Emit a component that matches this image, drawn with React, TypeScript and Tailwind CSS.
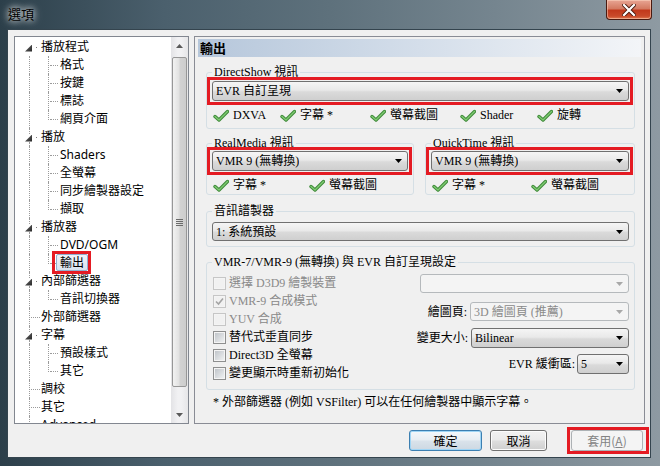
import React from 'react';

type Kind = 'root' | 'parent' | 'leaf' | 'child' | 'last' | 'end';

const TREE: { label: string; kind: Kind; sel?: boolean }[] = [
  { label: '播放程式', kind: 'root' },
  { label: '格式', kind: 'child' },
  { label: '按鍵', kind: 'child' },
  { label: '標誌', kind: 'child' },
  { label: '網頁介面', kind: 'last' },
  { label: '播放', kind: 'parent' },
  { label: 'Shaders', kind: 'child' },
  { label: '全螢幕', kind: 'child' },
  { label: '同步繪製器設定', kind: 'child' },
  { label: '擷取', kind: 'last' },
  { label: '播放器', kind: 'parent' },
  { label: 'DVD/OGM', kind: 'child' },
  { label: '輸出', kind: 'last', sel: true },
  { label: '內部篩選器', kind: 'parent' },
  { label: '音訊切換器', kind: 'last' },
  { label: '外部篩選器', kind: 'leaf' },
  { label: '字幕', kind: 'parent' },
  { label: '預設樣式', kind: 'child' },
  { label: '其它', kind: 'last' },
  { label: '調校', kind: 'leaf' },
  { label: '其它', kind: 'leaf' },
  { label: 'Advanced', kind: 'end' },
];

// expander glyph of the Win7 tree (filled, pointing down-right)
function Expander() {
  return (
    <div className="flex h-[18px] w-[22px] shrink-0 items-center">
      <div className="ml-[10px] mt-[2px] h-[7px] w-[7px] shrink-0 bg-[linear-gradient(135deg,#6a6a6a,#262626)] [clip-path:polygon(100%_0,100%_100%,0_100%)]" />
      <div className="ml-[4px] h-[1px] w-[1px] bg-[#808080]" />
    </div>
  );
}

// dotted connector lines
function Connector({ kind }: { kind: Kind }) {
  const level2 = kind === 'child' || kind === 'last';
  if (kind === 'root' || kind === 'parent') {
    return (
      <div className="relative h-[18px] w-[22px] shrink-0">
        {kind === 'parent' && (
          <>
            <div className="absolute left-[14px] top-0 h-[6px] border-l border-dotted border-[#9a9a9a]" />
            <div className="absolute left-[14px] top-[14px] h-[4px] border-l border-dotted border-[#9a9a9a]" />
          </>
        )}
        <Expander />
      </div>
    );
  }
  return (
    <div className={`relative h-[18px] shrink-0 ${level2 ? 'w-[41px]' : 'w-[22px]'}`}>
      <div
        className={`absolute left-[14px] top-0 border-l border-dotted border-[#9a9a9a] ${
          kind === 'end' ? 'h-[10px]' : 'h-[18px]'
        }`}
      />
      {!level2 && <div className="absolute left-[16px] top-[9px] w-[9px] border-t border-dotted border-[#9a9a9a]" />}
      {level2 && (
        <>
          <div
            className={`absolute left-[33px] top-0 border-l border-dotted border-[#9a9a9a] ${
              kind === 'last' ? 'h-[10px]' : 'h-[18px]'
            }`}
          />
          <div className="absolute left-[35px] top-[9px] w-[8px] border-t border-dotted border-[#9a9a9a]" />
        </>
      )}
    </div>
  );
}

function ScrollBar() {
  return (
    <div className="flex w-[17px] shrink-0 flex-col bg-[linear-gradient(90deg,#e3e3e6,#f1f1f3_40%,#f1f1f3_60%,#e6e6e8)]">
      <div className="flex h-[17px] items-center justify-center">
        <svg width="7" height="4" viewBox="0 0 7 4">
          <path d="M0 4H7L3.5 0Z" fill="#5a5a5a" />
        </svg>
      </div>
      <div className="flex-1">
        <div className="mx-[1px] mt-[3px] flex h-[330px] w-[15px] items-center justify-center rounded-[2px] border border-[#979797] bg-[linear-gradient(90deg,#f2f2f2,#e2e2e2_45%,#d2d2d2_55%,#cdcdcd)]">
          <div className="flex flex-col gap-[1px]">
            <div className="h-[1px] w-[7px] bg-[#6b6b6b]" />
            <div className="h-[1px] w-[7px] bg-[#6b6b6b]" />
            <div className="h-[1px] w-[7px] bg-[#6b6b6b]" />
            <div className="h-[1px] w-[7px] bg-[#6b6b6b]" />
          </div>
        </div>
      </div>
      <div className="flex h-[17px] items-center justify-center">
        <svg width="7" height="4" viewBox="0 0 7 4">
          <path d="M0 0H7L3.5 4Z" fill="#5a5a5a" />
        </svg>
      </div>
    </div>
  );
}

function Tree() {
  return (
    <div className="flex h-[388px] w-[175px] shrink-0 border border-[#828790] bg-white">
      <div className="flex-1 overflow-hidden pt-[1px] text-[12px] text-black">
        {TREE.map((r, i) => (
          <div key={i} className="flex h-[18px] items-center">
            <Connector kind={r.kind} />
            {r.sel ? (
              <span className="relative flex h-[17px] items-center self-start rounded-[2px] border border-[#93afcf] bg-[linear-gradient(#eef3f9,#d9e3ee)] px-[3px] leading-[15px]">
                {r.label}
                <span className="pointer-events-none absolute bottom-[-4px] left-[-5px] right-[-4px] top-[-4px] border-[3px] border-[#e41b23]" />
              </span>
            ) : (
              <span className="whitespace-nowrap border border-transparent px-[3px] leading-[16px]">{r.label}</span>
            )}
          </div>
        ))}
      </div>
      <ScrollBar />
    </div>
  );
}

function Arrow({ disabled }: { disabled?: boolean }) {
  return (
    <svg width="7" height="4" viewBox="0 0 7 4" className="shrink-0">
      <path d="M0 0H7L3.5 4Z" fill={disabled ? '#a8a8a8' : '#000'} />
    </svg>
  );
}

function Combo({ text, className = '', disabled = false }: { text?: string; className?: string; disabled?: boolean }) {
  return (
    <div
      className={`flex items-center justify-between rounded-[3px] border pl-[3px] pr-[5px] ${
        disabled
          ? 'border-[#b5b9bc] bg-[#f4f4f4] text-[#8a8a8a]'
          : 'border-[#707070] bg-[linear-gradient(#f5f5f5,#e9e9e9_45%,#dadada_55%,#cfcfcf)] text-black'
      } ${className}`}
    >
      <span className="truncate leading-[14px]">{text}</span>
      <Arrow disabled={disabled} />
    </div>
  );
}

function Marked({ children }: { children: React.ReactNode }) {
  return (
    <div className="relative">
      {children}
      <span className="pointer-events-none absolute bottom-[-4px] left-[-5px] right-[-4px] top-[-4px] border-[3px] border-[#e41b23]" />
    </div>
  );
}

function GreenCheck() {
  return (
    <svg width="16" height="13" viewBox="0 0 16 13" className="shrink-0">
      <path d="M2 7.5 L6 11 L14.5 2.5" fill="none" stroke="#3f8a3a" strokeWidth="3.4" strokeLinecap="round" strokeLinejoin="round" />
      <path d="M2 7.5 L6 11 L14.5 2.5" fill="none" stroke="#7fcb72" strokeWidth="1.4" strokeLinecap="round" strokeLinejoin="round" />
    </svg>
  );
}

function Feat({ label, className = '' }: { label: string; className?: string }) {
  return (
    <div className={`flex h-[14px] items-center ${className}`}>
      <GreenCheck />
      <span className="ml-[4px] whitespace-nowrap leading-[14px]">{label}</span>
    </div>
  );
}

function CheckBox({ label, checked, disabled }: { label: string; checked?: boolean; disabled?: boolean }) {
  return (
    <div className="flex h-[18px] items-center">
      <span
        className={`flex h-[13px] w-[13px] shrink-0 items-center justify-center border p-[1px] ${
          disabled ? 'border-[#c6c6c6] bg-[#f4f4f4]' : 'border-[#8e8f8f] bg-[#f4f4f4]'
        }`}
      >
        <span
          className={`relative block h-[9px] w-[9px] ${
            disabled ? 'bg-[#f1f1f1]' : 'bg-[linear-gradient(135deg,#c1c5ca,#eef0f1)]'
          }`}
        >
          {checked && (
            <svg width="9" height="9" viewBox="0 0 9 9" className="absolute left-0 top-0">
              <path d="M1 4.5 L3.5 7 L8 1.5" fill="none" stroke="#a4a4a4" strokeWidth="1.6" />
            </svg>
          )}
        </span>
      </span>
      <span className={`ml-[3px] whitespace-nowrap leading-[14px] ${disabled ? 'text-[#8a8a8a]' : 'text-black'}`}>{label}</span>
    </div>
  );
}

const GROUP = 'rounded-[3px] border border-[#d5dfe5] px-[5px]';
const LEGEND = 'px-[2px] leading-[14px]';

function OutputPage() {
  return (
    <div className="flex h-[388px] w-[451px] shrink-0 flex-col border border-[#898c95] text-[12px] text-black [font-family:'Liberation_Serif','Noto_Sans_CJK_TC',serif]">
      <div className="mx-[3px] mt-[2px] flex h-[18px] items-center bg-[linear-gradient(90deg,#b6c7db,#d4deea_50%,#f3f5f8)] pl-[2px] text-[13px] font-bold [font-family:'Noto_Sans_CJK_TC',sans-serif]">
        輸出
      </div>
      <div className="flex flex-col pl-[11px] pr-[9px]">
        {/* DirectShow */}
        <fieldset className={`mt-[8px] pb-[6px] ${GROUP}`}>
          <legend className={LEGEND}>DirectShow 視訊</legend>
          <div className="mt-[2px]">
            <Marked>
              <Combo text="EVR 自訂呈現" className="h-[20px]" />
            </Marked>
          </div>
          <div className="mt-[7px] flex pl-[1px]">
            <Feat label="DXVA" className="w-[67px]" />
            <Feat label="字幕 *" className="w-[90px]" />
            <Feat label="螢幕截圖" className="w-[90px]" />
            <Feat label="Shader" className="w-[77px]" />
            <Feat label="旋轉" />
          </div>
        </fieldset>

        {/* RealMedia / QuickTime */}
        <div className="mt-[7px] flex gap-[11px]">
          <fieldset className={`w-[208px] pb-[2px] ${GROUP}`}>
            <legend className={LEGEND}>RealMedia 視訊</legend>
            <div className="mt-[1px]">
              <Marked>
                <Combo text="VMR 9 (無轉換)" className="h-[20px]" />
              </Marked>
            </div>
            <div className="mt-[7px] flex pl-[1px]">
              <Feat label="字幕 *" className="w-[96px]" />
              <Feat label="螢幕截圖" />
            </div>
          </fieldset>
          <fieldset className={`flex-1 pb-[2px] ${GROUP}`}>
            <legend className={LEGEND}>QuickTime 視訊</legend>
            <div className="mt-[1px]">
              <Marked>
                <Combo text="VMR 9 (無轉換)" className="h-[20px]" />
              </Marked>
            </div>
            <div className="mt-[7px] flex pl-[1px]">
              <Feat label="字幕 *" className="w-[99px]" />
              <Feat label="螢幕截圖" />
            </div>
          </fieldset>
        </div>

        {/* Audio */}
        <fieldset className={`mt-[9px] pb-[5px] ${GROUP}`}>
          <legend className={LEGEND}>音訊譜製器</legend>
          <Combo text="1: 系統預設" className="mt-[4px] h-[19px]" />
        </fieldset>

        {/* VMR settings */}
        <fieldset className={`mt-[8px] pb-[7px] ${GROUP}`}>
          <legend className={LEGEND}>VMR-7/VMR-9 (無轉換) 與 EVR 自訂呈現設定</legend>
          <div className="mt-[5px] flex justify-between">
            <div className="flex flex-col pl-[1px]">
              <CheckBox label="選擇 D3D9 繪製裝置" disabled />
              <CheckBox label="VMR-9 合成模式" checked disabled />
              <CheckBox label="YUV 合成" disabled />
              <CheckBox label="替代式垂直同步" />
              <CheckBox label="Direct3D 全螢幕" />
              <CheckBox label="變更顯示時重新初始化" />
            </div>
            <div className="flex flex-col items-end">
              <Combo className="h-[19px] w-[209px]" disabled />
              <div className="mt-[9px] flex items-center gap-[3px]">
                <span className="leading-[14px]">繪圖頁:</span>
                <Combo text="3D 繪圖頁 (推薦)" className="h-[19px] w-[159px]" disabled />
              </div>
              <div className="mt-[7px] flex items-center gap-[3px]">
                <span className="leading-[14px]">變更大小:</span>
                <Combo text="Bilinear" className="h-[20px] w-[158px]" />
              </div>
              <div className="mt-[6px] flex items-center gap-[2px]">
                <span className="leading-[14px]">EVR 緩衝區:</span>
                <Combo text="5" className="h-[20px] w-[52px]" />
              </div>
            </div>
          </div>
        </fieldset>

        <div className="mt-[5px] pl-[7px] leading-[14px]">* 外部篩選器 (例如 VSFilter) 可以在任何繪製器中顯示字幕。</div>
      </div>
    </div>
  );
}

function Button({ children, className = '', kind = 'normal' }: { children: React.ReactNode; className?: string; kind?: 'normal' | 'default' | 'disabled' }) {
  const look =
    kind === 'disabled'
      ? 'border-[#adb2b5] bg-[#f4f4f4] text-[#838383]'
      : kind === 'default'
      ? 'border-[#3c7fb1] bg-[linear-gradient(#f4f8fb,#e8eef3_45%,#d9e2ea_55%,#cdd8e2)] text-black shadow-[inset_0_0_0_1px_#9fd5f5]'
      : 'border-[#707070] bg-[linear-gradient(#f2f2f2,#ebebeb_45%,#dddddd_55%,#cfcfcf)] text-black shadow-[inset_0_0_0_1px_#fcfcfc]';
  return (
    <div className={`flex h-[21px] items-center justify-center rounded-[3px] border text-[12px] ${look} ${className}`}>
      {children}
    </div>
  );
}

export default function App() {
  return (
    <div className="relative h-[466px] w-[660px] overflow-hidden bg-[linear-gradient(90deg,#2c3f4a_0%,#4b606d_25%,#5e717c_50%,#75858f_75%,#8e9aa2_100%)] [font-family:'Noto_Sans','Noto_Sans_CJK_TC',sans-serif]">
      {/* title bar */}
      <div className="flex h-[29px] items-center pl-[8px]">
        <span className="text-[13px] text-black [text-shadow:0_0_6px_rgba(255,255,255,0.95),0_0_10px_rgba(255,255,255,0.7)]">選項</span>
      </div>
      <div className="absolute right-[8px] top-0 flex h-[20px] w-[46px] items-center justify-center rounded-b-[4px] border border-t-0 border-[#4a1a10] bg-[linear-gradient(#e8a594,#d47a62_45%,#c2391c_55%,#c94a2a_85%,#e07a52)] shadow-[inset_0_0_0_1px_rgba(255,220,200,0.5)]">
        <svg width="14" height="12" viewBox="0 0 14 12">
          <path d="M2 1 L12 11 M12 1 L2 11" stroke="#4b1a0d" strokeWidth="4" strokeLinecap="square" />
          <path d="M2 1 L12 11 M12 1 L2 11" stroke="#fff" strokeWidth="2.2" strokeLinecap="square" />
        </svg>
      </div>

      {/* client area */}
      <div className="ml-[7px] flex h-[429px] w-[644px] flex-col border border-[#34444e] bg-[#f0f0f0] pb-[6px] pl-[6px] pr-[5px] pt-[6px]">
        <div className="flex gap-[5px]">
          <Tree />
          <OutputPage />
        </div>
        <div className="mt-[6px] flex justify-end pr-[2px] [font-family:'Noto_Sans_CJK_TC',sans-serif]">
          <Button kind="default" className="w-[73px]">確定</Button>
          <Button className="ml-[8px] w-[57px]">取消</Button>
          <div className="relative ml-[24px]">
            <Button kind="disabled" className="w-[72px]">
              套用(<span className="underline">A</span>)
            </Button>
            <span className="pointer-events-none absolute bottom-[-3px] left-[-4px] right-[-6px] top-[-3px] border-[3px] border-[#e41b23]" />
          </div>
        </div>
      </div>
    </div>
  );
}
